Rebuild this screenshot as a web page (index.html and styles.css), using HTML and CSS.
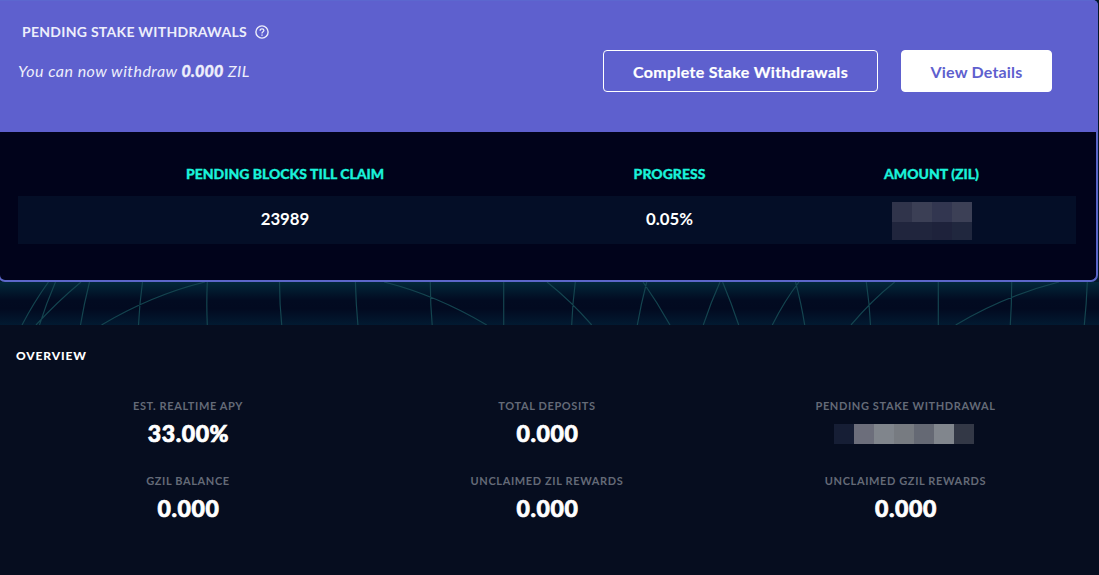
FILE: index.html
```html
<!DOCTYPE html>
<html lang="en">
<head>
<meta charset="utf-8">
<title>Staking Wallet</title>
<link rel="stylesheet" href="styles.css">
</head>
<body>
<section class="card">
  <header class="card-head">
    <div class="intro">
      <h2 class="title"><span class="title-text">PENDING STAKE WITHDRAWALS</span>
        <svg class="help" viewBox="0 0 14 14" width="14" height="14" fill="none" stroke="currentColor"><circle cx="7" cy="7" r="6.1" stroke-width="1.4"/><path d="M5.1 5.7C5.1 4.5 5.9 3.9 7 3.9s1.9.7 1.9 1.7C8.9 6.8 7 6.9 7 8.5" stroke-width="1.3"/><path d="M7 9.4v1.3" stroke-width="1.4"/></svg>
      </h2>
      <p class="message"><span>You can now withdraw</span> <b>0.000</b> <span>ZIL</span></p>
    </div>
    <div class="actions">
      <button class="btn btn-outline"><span>Complete Stake Withdrawals</span></button>
      <button class="btn btn-solid"><span>View Details</span></button>
    </div>
  </header>
  <div class="table">
    <div class="row row-head"><span>PENDING BLOCKS TILL CLAIM</span><span>PROGRESS</span><span>AMOUNT (ZIL)</span></div>
    <div class="row row-data"><span class="value">23989</span><span class="value">0.05%</span><span class="mask mask-table"><i class="a"></i><i class="b"></i><i class="c"></i><i class="d"></i><i class="e"></i><i class="e"></i><i class="f"></i><i class="g"></i></span></div>
  </div>
</section>
<svg class="web" viewBox="0 0 1099 43" width="1099" height="43" fill="none">
  <path d="M48.5 0Q34 20 22 43M55.5 0Q46 22 39.500 43M81 0Q57 20 36 43M89.500 0Q84 22 80.500 43M142.500 0Q139.500 22 138.500 43M205 0Q152 13 101.500 43M207.300 0Q206.300 22 207.300 43M279.500 0Q279.600 22 281.700 43M355.400 0Q356 22 357.900 43M384 0Q436 13 486.700 43M430.300 0Q430.300 22 432.200 43M503.700 0V43M547 0Q571 19 591.700 43M575.300 0Q572.500 22 571.700 43M643 0Q657 20 670 43M646.700 0Q641 22 637.300 43M720 0Q711 20 703.300 43M722.600 0Q731 20 738.700 43M795.500 0Q801 20 804.700 43M799 0Q785 18 772.300 43M866.300 0Q869.500 22 870.500 43M894.700 0Q872 18 851 43M938.300 0V43M1011.700 0Q1011.700 22 1010.300 43M1059 0Q1004 14 955.700 43M1087.300 0Q1086.500 22 1084.300 43"/>
</svg>
<section class="overview">
  <h2 class="overview-title">OVERVIEW</h2>
  <div class="stats">
    <div class="stat"><span class="label">EST. REALTIME APY</span><strong>33.00%</strong></div>
    <div class="stat"><span class="label">TOTAL DEPOSITS</span><strong>0.000</strong></div>
    <div class="stat"><span class="label">PENDING STAKE WITHDRAWAL</span><span class="mask mask-stat"><i class="m1"></i><i class="m2"></i><i class="m3"></i><i class="m4"></i><i class="m5"></i><i class="m6"></i><i class="m7"></i></span></div>
    <div class="stat"><span class="label">GZIL BALANCE</span><strong>0.000</strong></div>
    <div class="stat"><span class="label">UNCLAIMED ZIL REWARDS</span><strong>0.000</strong></div>
    <div class="stat"><span class="label">UNCLAIMED GZIL REWARDS</span><strong>0.000</strong></div>
  </div>
</section>
</body>
</html>
```
FILE: styles.css
```css
* { box-sizing: border-box; }
body { margin: 0; width: 1099px; height: 575px; overflow: hidden; background: #011829; color: #fff; font-family: Lato, "Liberation Sans", sans-serif; }
h2, p { margin: 0; }
.card { width: 1100px; height: 282px; margin-left: -2px; border: 2px solid #5c67c9; border-top: 0; border-radius: 0 6px 7px 7px; background: #01031b; }
.card-head { height: 132px; margin-right: -2px; padding-right: 46px; border-top: 1px solid #5c67cf; border-top-right-radius: 5px; background: #5e60ce; display: flex; justify-content: space-between; }
.intro { padding: 21px 0 0 17px; }
.title { display: flex; align-items: center; gap: 8px; height: 20px; padding-left: 5px; font-size: 14px; line-height: 20px; font-weight: 700; color: #edeefb; }
.title-text { letter-spacing: .28px; }
.message { margin-top: 18px; padding-left: 1px; font-size: 16px; line-height: 22px; letter-spacing: .48px; font-style: italic; color: #edeefb; white-space: nowrap; }
.message b { font-weight: 900; letter-spacing: .2px; -webkit-text-stroke: .4px; }
.actions { display: flex; gap: 23px; padding-top: 49px; }
.btn { height: 42px; padding: 2px 0 0; border: 1px solid #fff; border-radius: 4px; font: 700 16px/20px Lato, "Liberation Sans", sans-serif; white-space: nowrap; }
.btn-outline { width: 275px; background: transparent; color: #fff; letter-spacing: .33px; -webkit-text-stroke: .2px; }
.btn-solid { width: 151px; background: #fff; color: #5e60ce; letter-spacing: .2px; }
.table { padding: 32px 20px 0 18px; }
.row { display: grid; grid-template-columns: 534px 235px 289px; align-items: center; justify-items: center; }
.row-head { height: 32px; padding-bottom: 12px; font-size: 14px; line-height: 20px; font-weight: 900; color: #1af2da; -webkit-text-stroke: .3px; }
.row-data { height: 48px; background: #040e27; font-size: 16.800px; line-height: 20px; font-weight: 700; }
.value { padding-bottom: 3px; }
.mask { display: grid; }
.mask-table { margin-top: 2px; grid-template: 20px 18px / repeat(4, 20px); }
.a { background: #30344b; } .b { background: #3b3f55; } .c { background: #323650; } .d { background: #3c4056; }
.e { background: #20253d; } .f { background: #1e223b; } .g { background: #20273e; }
.web { display: block; background: linear-gradient(#02283a, #020b21 42%, #020a20 62%, #021a31); }
.web path { stroke: #14444f; stroke-width: 1.2; }
.overview { height: 250px; padding: 21px 10px 0 8px; background: #060d1f; }
.overview-title { margin-left: 8px; font-size: 12px; line-height: 20px; font-weight: 900; letter-spacing: .85px; }
.stats { display: grid; grid-template-columns: 360px 358px 359px; grid-auto-rows: 75px; margin-top: 31px; }
.stat { display: flex; flex-direction: column; align-items: center; }
.label { height: 18px; font-size: 11px; line-height: 18px; letter-spacing: .62px; color: #646a77; font-weight: 700; white-space: nowrap; }
.stat strong { margin: 3px 0 0 1px; font-size: 23px; line-height: 30px; font-weight: 900; letter-spacing: .6px; -webkit-text-stroke: .7px; }
.mask-stat { margin: 9px 3px 0 0; grid-template: 20px / repeat(7, 20px); }
.m1 { background: #161e35; } .m2 { background: #6c6e7b; } .m3 { background: #80858c; } .m4 { background: #777b81; }
.m5 { background: #656974; } .m6 { background: #81868d; } .m7 { background: #333846; }
```
